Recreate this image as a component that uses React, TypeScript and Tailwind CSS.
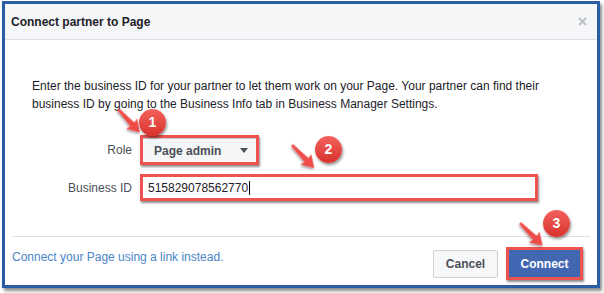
const arrows = [
  { x: 118, y: 109, angle: 47, len: 32 },
  { x: 292, y: 145, angle: 46, len: 32 },
  { x: 520, y: 223, angle: 45, len: 32 },
];

const badges = [
  { n: 1, cls: 'left-[139px] top-[109px]' },
  { n: 2, cls: 'left-[315px] top-[136px]' },
  { n: 3, cls: 'left-[543px] top-[210px]' },
];

function Arrow({ x, y, angle, len }: { x: number; y: number; angle: number; len: number }) {
  const h = len - 11;
  return (
    <path
      transform={`translate(${x} ${y}) rotate(${angle})`}
      d={`M0,-1.2 L${h},-2.8 L${h - 1},-7.5 L${len},0 L${h - 1},7.5 L${h},2.8 L0,1.2 Z`}
      fill="#ee4c48"
      filter="url(#ds)"
    />
  );
}

export default function App() {
  return (
    <div
      className="relative h-[293px] w-[604px] overflow-hidden bg-white pl-[2px] pt-[1px] text-[12px]"
      style={{ fontFamily: "'Liberation Sans', Arial, sans-serif" }}
    >
      <div className="flex h-[287px] w-[598px] flex-col border-[3px] border-[#2b5ca6] bg-white shadow-[2px_3px_3px_rgba(0,0,0,0.45)]">
        {/* header */}
        <div className="flex h-[36px] shrink-0 items-center justify-between border-b border-[#dddfe2] bg-[#f5f6f7] pl-[6px] pr-[10px]">
          <span className="font-bold text-[#1d2129]">Connect partner to Page</span>
          <svg width="9" height="9" viewBox="0 0 9 9">
            <path d="M1 1 L8 8 M8 1 L1 8" stroke="#bec2c9" strokeWidth="2" />
          </svg>
        </div>

        {/* body */}
        <div className="pl-[27px] pr-[10px] pt-[37px]">
          <p className="leading-[18px] text-[#1d2129]">
            Enter the business ID for your partner to let them work on your Page. Your partner can find their
            business ID by going to the Business Info tab in Business Manager Settings.
          </p>

          <div className="mt-[22px] flex h-[30px] items-center">
            <span className="w-[100px] text-right text-[#4b4f56]">Role</span>
            <div className="ml-[8px] h-[30px] w-[119px] border-[3px] border-[#ef5350] shadow-[1px_2px_2px_rgba(0,0,0,0.45)]">
              <div className="flex h-full items-center justify-between border-t border-[#c4c7cc] bg-[#f5f6f7] pl-[11px] pr-[8px]">
                <span className="font-bold text-[#4b4f56]">Page admin</span>
                <svg width="8" height="5" viewBox="0 0 8 5">
                  <path d="M0 0 L8 0 L4 5 Z" fill="#4b4f56" />
                </svg>
              </div>
            </div>
          </div>

          <div className="mt-[9px] flex h-[27px] items-center">
            <span className="w-[100px] text-right text-[#4b4f56]">Business ID</span>
            <div className="ml-[8px] flex h-[27px] w-[398px] items-center border-[3px] border-[#ef5350] bg-white pl-[5px] shadow-[1px_2px_2px_rgba(0,0,0,0.45)]">
              <span className="text-[#1d2129]">515829078562770</span>
              <span className="ml-[1px] h-[14px] w-[1px] bg-black" />
            </div>
          </div>
        </div>

        {/* footer */}
        <div className="mx-[7px] mt-[35px] flex h-[48px] items-center justify-between border-t border-[#dddfe2] pr-[7px] pt-[6px]">
          <a className="mb-[13px] text-[#4a86c8]">Connect your Page using a link instead.</a>
          <div className="flex items-center">
            <button className="h-[28px] w-[65px] rounded-[2px] border border-[#ced0d4] bg-[#f6f7f9] font-bold text-[#4b4f56]">
              Cancel
            </button>
            <div className="ml-[8px] h-[33px] w-[77px] border-[3px] border-[#ef5350] shadow-[1px_2px_2px_rgba(0,0,0,0.45)]">
              <button className="h-full w-full bg-[#4267b2] font-bold text-white">Connect</button>
            </div>
          </div>
        </div>
      </div>

      {/* annotations */}
      <svg className="pointer-events-none absolute left-0 top-0" width="604" height="293">
        <defs>
          <filter id="ds" x="-50%" y="-50%" width="200%" height="200%">
            <feDropShadow dx="1" dy="1.5" stdDeviation="1" floodColor="#000" floodOpacity="0.4" />
          </filter>
        </defs>
        {arrows.map((a, i) => (
          <Arrow key={i} {...a} />
        ))}
      </svg>
      {badges.map((b) => (
        <div
          key={b.n}
          className={`absolute ${b.cls} flex h-[27px] w-[27px] items-center justify-center rounded-full bg-gradient-to-b from-[#f4615c] to-[#d8302b] text-[14px] font-bold text-white shadow-[1px_2px_3px_rgba(0,0,0,0.45)]`}
        >
          {b.n}
        </div>
      ))}
    </div>
  );
}
